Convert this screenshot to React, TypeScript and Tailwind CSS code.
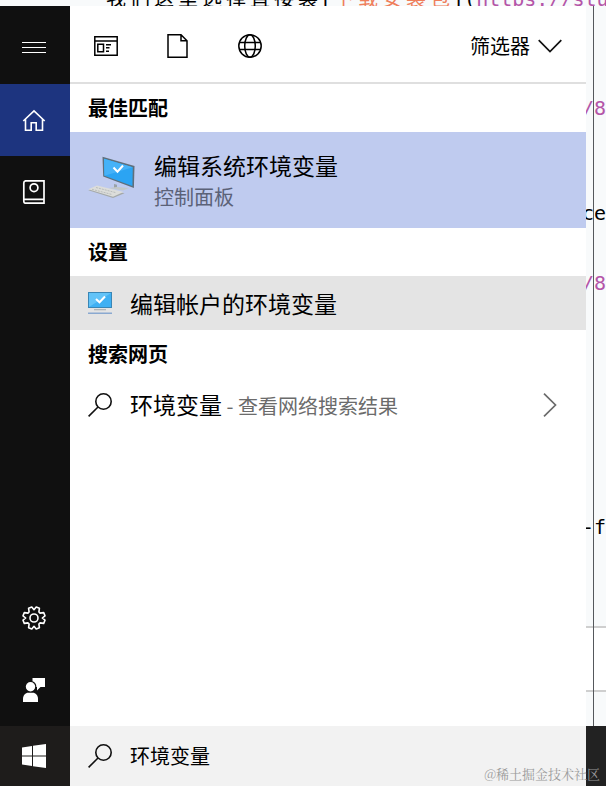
import React from "react";

const cjk = "font-['Noto_Sans_CJK_SC',sans-serif]";

function SearchIcon() {
  return (
    <svg width="24" height="24" viewBox="0 0 24 24" fill="none" stroke="#111" strokeWidth="1.6" aria-hidden="true">
      <circle cx="15.5" cy="8.5" r="7.7" />
      <path d="M10 14L.6 23.4" />
    </svg>
  );
}

function SideButton({ label, className, children }: { label: string; className?: string; children: React.ReactNode }) {
  return (
    <button aria-label={label} className={`flex h-[72px] w-full shrink-0 items-center justify-center pr-0.5 text-white ${className ?? ""}`}>
      {children}
    </button>
  );
}

function Sidebar() {
  return (
    <nav className="flex w-[70px] shrink-0 flex-col bg-[#101010] pt-1.5">
      <SideButton label="菜单">
        <svg width="24" height="12" viewBox="0 0 24 12" stroke="currentColor" strokeWidth="1" aria-hidden="true">
          <path d="M0 .5h24M0 5.5h24M0 10.5h24" />
        </svg>
      </SideButton>
      <SideButton label="主页" className="bg-[#1d347f]">
        <svg width="24" height="24" viewBox="0 0 24 24" fill="none" stroke="currentColor" strokeWidth="1.6" aria-hidden="true">
          <path d="M1.300 13L12 2.800 22.700 13M3.500 11v11.300h5.700v-7.500h5v7.500h6.300V11" />
        </svg>
      </SideButton>
      <SideButton label="笔记本">
        <svg width="24" height="24" viewBox="0 0 24 24" fill="none" stroke="currentColor" strokeWidth="1.700" aria-hidden="true">
          <path d="M22 .8v22.400H3.800C2 23.200 1.800 22 1.800 21V3C1.800 1.500 2.500.8 4 .8zM1.800 19.300h20.200" />
          <circle cx="12" cy="7.700" r="3.900" />
        </svg>
      </SideButton>
      <div className="flex-1" />
      <SideButton label="设置">
        <svg width="24" height="24" viewBox="0 0 24 24" fill="none" stroke="currentColor" strokeWidth="1.600" strokeLinejoin="round" aria-hidden="true">
          <path d="M12 3.700L14.200 1l3.200 1.300-.5 3.600 1.200 1.200 3.600-.5L23 9.800 20.300 12 23 14.200l-1.300 3.200-3.600-.5-1.200 1.200.5 3.600L14.200 23 12 20.300 9.800 23l-3.200-1.300.5-3.600-1.200-1.200-3.600.5L1 14.200 3.700 12 1 9.800l1.300-3.200 3.600.5 1.200-1.200-.5-3.600L9.800 1z" />
          <circle cx="12" cy="12" r="4" />
        </svg>
      </SideButton>
      <SideButton label="反馈">
        <svg width="24" height="24" viewBox="0 0 24 24" fill="currentColor" aria-hidden="true">
          <path d="M10.500 0H23v9h-4.500L15 12.500V9h-.6c0-3-1.600-5.200-3.900-5.700z" />
          <circle cx="8.500" cy="8.800" r="4.700" />
          <path d="M1 24v-3c0-3.800 2.500-6.200 5.200-6.200h4.600c2.700 0 5.200 2.400 5.200 6.200v3z" />
        </svg>
      </SideButton>
    </nav>
  );
}

function SystemIcon() {
  return (
    <svg width="48" height="48" viewBox="0 0 48 48" aria-hidden="true">
      <path d="M26 28l3 .8v4l-3-.8z" fill="#9aa2a8" />
      <path d="M20 32l9-1 12 1-6 2.500z" fill="#c3c8c8" />
      <path d="M14.500 .8L46.500 10l-.6 22L15.200 20.500z" fill="#5f6f7b" />
      <path d="M16 2.800l28.800 8.400-.4 18.800-28-10.200z" fill="#2ba4f3" />
      <path d="M16 2.800l28.800 8.400L16.400 19.800z" fill="#45b2f8" />
      <path d="M25.500 11.500l4 4.200 5.500-6.200" fill="none" stroke="#fff" strokeWidth="2" />
      <path d="M.3 34.200L9 30.200l27.500 7L25 42z" fill="#a4a9a9" />
      <path d="M.3 33.200L9 29.500l26.500 6.500L25 40.800z" fill="#dcddda" />
      <path d="M4 33.300l20 5.200M8 31.500l20 5.200" stroke="#b9bdbc" strokeDasharray="2 1" />
    </svg>
  );
}

function AccountIcon() {
  return (
    <svg width="24" height="24" viewBox="0 0 24 24" aria-hidden="true">
      <path d="M0 1h24v16H0z" fill="#3a86b5" />
      <path d="M1 2h22v14H1z" fill="#3fb0f3" />
      <path d="M1 2h22L1 16z" fill="#62c3f8" />
      <path d="M8 8l3.500 3.300L17 5.500" fill="none" stroke="#fff" strokeWidth="2" />
      <path d="M6 18h12v1.300H6z" fill="#b0b5b8" />
      <path d="M0 21.500h24V23H0z" fill="#8aa9d0" />
    </svg>
  );
}

function FilterBar() {
  return (
    <div className="flex h-[78px] shrink-0 items-center border-b-2 border-[#dfdfdf] px-6 pt-1">
      <div className="flex flex-1 items-center gap-12">
        <button aria-label="应用">
          <svg width="24" height="24" viewBox="0 0 24 24" fill="none" stroke="#000" strokeWidth="1.500" aria-hidden="true">
            <path d="M.8 2.800h22.400v18.400H.8zM.8 7h22.400M3.800 10.200h5.700v7.600H3.800zM12 10.700h5M12 13.800h3.500M12 17.200h3" />
          </svg>
        </button>
        <button aria-label="文档">
          <svg width="24" height="24" viewBox="0 0 24 24" fill="none" stroke="#000" strokeWidth="1.500" aria-hidden="true">
            <path d="M2 .8h13l6 6v16.400H2zM15 .8v6h6" />
          </svg>
        </button>
        <button aria-label="网页">
          <svg width="24" height="24" viewBox="0 0 24 24" fill="none" stroke="#000" strokeWidth="1.500" aria-hidden="true">
            <circle cx="12" cy="12" r="11.200" />
            <ellipse cx="12" cy="12" rx="5.300" ry="11.200" />
            <path d="M1.500 8.500h21M1.500 15.500h21" />
          </svg>
        </button>
      </div>
      <button className="flex items-center gap-2 text-[20px] leading-[30px]">
        筛选器
        <svg width="24" height="14" viewBox="0 0 24 14" fill="none" stroke="#111" strokeWidth="1.700" aria-hidden="true">
          <path d="M.7 1.200L12 12.500 23.300 1.200" />
        </svg>
      </button>
    </div>
  );
}

function Heading({ children }: { children: React.ReactNode }) {
  return <h2 className="flex h-12 items-center px-[18px] text-[20px] leading-[30px] font-bold">{children}</h2>;
}

function GridText({ text, className }: { text: string; className?: string }) {
  return (
    <span className={`flex ${className ?? ""}`}>
      {Array.from(text).map((char, i) => (
        <span key={i} className="w-6 text-center">{char}</span>
      ))}
    </span>
  );
}

function EditorEdge() {
  return (
    <div aria-hidden="true" className="relative w-5 shrink-0 overflow-hidden bg-[#f8fafb] font-['DejaVu_Sans_Mono',monospace] text-[20px] leading-6 whitespace-nowrap">
      <span className="absolute top-[90px] right-0 text-[#b455a8]">/8</span>
      <span className="absolute top-[195px] right-0">ce</span>
      <span className="absolute top-[265px] right-0 text-[#b455a8]">/8</span>
      <span className="absolute top-[509px] right-0">-f</span>
      <div className="absolute inset-x-0 top-[620px] h-[66px] border-y-2 border-[#cfcfcf] bg-white" />
      <div className="absolute inset-y-0 left-[7px] w-px bg-[#55585c]" />
    </div>
  );
}

export default function App() {
  return (
    <div className={`relative flex h-screen flex-col overflow-hidden bg-white text-black ${cjk}`}>
      <div aria-hidden="true" className="flex h-1.5 shrink-0 flex-col justify-end overflow-hidden bg-[#f8fafb] font-['DejaVu_Sans_Mono','Noto_Sans_CJK_SC',monospace] text-[20px] leading-[14px] whitespace-pre">
        <div className="flex pl-[104px]">
          <GridText text="我们这里选择直接装" />
          <span>[</span>
          <GridText text="下载安装包" className="text-[#ef7f5c]" />
          <span>](</span>
          <span className="text-[#b455a8]">https://stu</span>
        </div>
      </div>
      <div className="flex min-h-0 flex-1">
        <Sidebar />
        <main className="flex min-w-0 flex-1 flex-col">
          <FilterBar />
          <Heading>最佳匹配</Heading>
          <button className="flex h-24 items-center gap-[18px] bg-[#bfcbef] px-[18px] text-left">
            <SystemIcon />
            <span className="flex flex-col">
              <span className="text-[23px] leading-[34px]">编辑系统环境变量</span>
              <span className="text-[20px] leading-[30px] text-[#5b6278]">控制面板</span>
            </span>
          </button>
          <Heading>设置</Heading>
          <button className="flex h-[54px] items-center gap-[18px] bg-[#e4e4e4] px-[18px] text-left text-[23px] leading-[34px]">
            <AccountIcon />
            编辑帐户的环境变量
          </button>
          <Heading>搜索网页</Heading>
          <button className="flex h-[54px] items-center gap-[18px] pr-6 pl-[18px] text-left">
            <SearchIcon />
            <span className="flex-1 text-[23px] leading-[34px]">
              环境变量<span className="text-[20px] text-[#6b6b6b]"> - 查看网络搜索结果</span>
            </span>
            <svg width="24" height="24" viewBox="0 0 24 24" fill="none" stroke="#6b6b6b" strokeWidth="1.700" aria-hidden="true">
              <path d="M6 .7L17.500 12 6 23.300" />
            </svg>
          </button>
        </main>
        <EditorEdge />
      </div>
      <div className="flex h-[60px] shrink-0 bg-[#222]">
        <button aria-label="开始" className="flex w-[70px] shrink-0 items-center justify-center bg-[#1e1c1b] pr-0.5">
          <svg width="24" height="24" viewBox="0 0 24 24" fill="#fff" aria-hidden="true">
            <path d="M0 3.500l10-1.500v9.500H0zM11 1.800L24 0v11.500H11zM0 12.500h10V22L0 20.500zM11 12.500h13V24l-13-1.800z" />
          </svg>
        </button>
        <label className="mr-5 flex min-w-0 flex-1 items-center gap-[18px] bg-[#f2f2f2] px-[18px]">
          <SearchIcon />
          <input aria-label="搜索" defaultValue="环境变量" className="min-w-0 flex-1 bg-transparent text-[20px] leading-[30px] outline-none" />
        </label>
      </div>
      <span className="absolute right-1.5 bottom-0.5 font-['Noto_Serif_CJK_SC','Noto_Sans_CJK_SC',serif] text-[13px] leading-5 text-[#9a9a9a]">@稀土掘金技术社区</span>
    </div>
  );
}
